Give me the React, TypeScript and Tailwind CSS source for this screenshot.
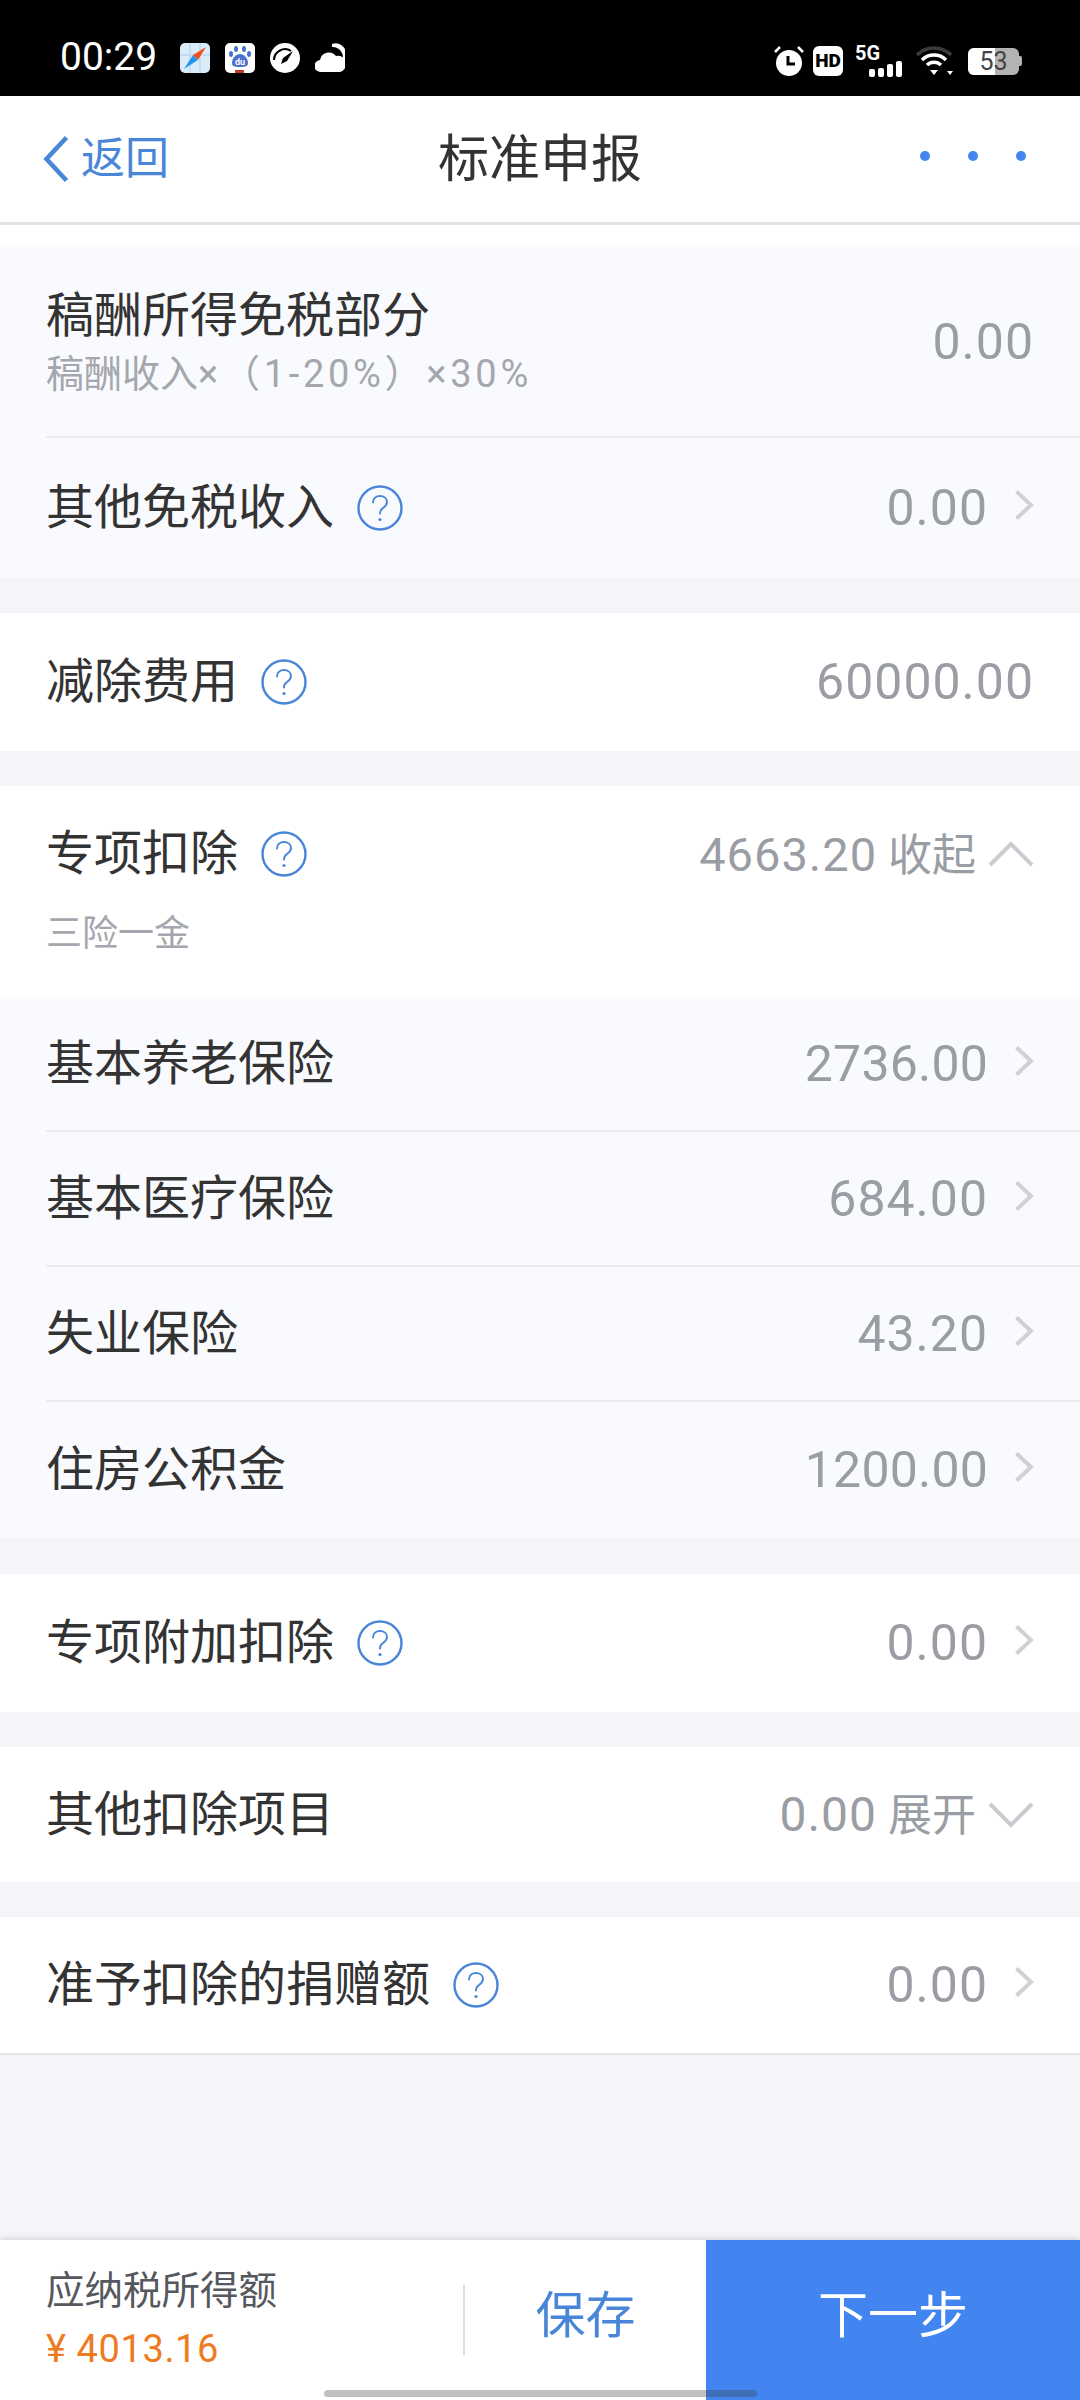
const fontStack = 'font-["Roboto","Noto_Sans_CJK_SC",sans-serif]';

function Help() {
  return (
    <svg width="46" height="46" viewBox="0 0 46 46" fill="none" className="shrink-0">
      <circle cx="23" cy="23" r="21.5" stroke="#4a86d8" strokeWidth="2.4" />
      <path d="M16 17.5c0-4 3-6.500 7-6.500s7 2.500 7 6c0 3-2 4.500-4 6-2 1.400-3 2.500-3 5.500" stroke="#4a86d8" strokeWidth="2" strokeLinecap="round" />
      <circle cx="23" cy="34.500" r="1.600" fill="#4a86d8" />
    </svg>
  );
}

function Chevron() {
  return (
    <svg width="20" height="32" viewBox="0 0 20 32" fill="none" className="shrink-0 -mt-[6px]">
      <path d="M2.500 2.500 L17 16 L2.500 29.500" stroke="#cfd1d6" strokeWidth="4" />
    </svg>
  );
}

function Fold({ up }: { up: boolean }) {
  return (
    <svg width="46" height="26" viewBox="0 0 46 26" fill="none" className="shrink-0">
      <path d={up ? 'M2 24 L23 3 L44 24' : 'M2 2 L23 23 L44 2'} stroke="#c9cbd1" strokeWidth="4" />
    </svg>
  );
}

function Row({ label, value, help, arrow, divider, tight, heightClass }: { label: string; value: string; help?: boolean; arrow?: boolean; divider?: boolean; tight?: boolean; heightClass: string }) {
  return (
    <div className="pl-[46px]">
      <div className={`flex items-center justify-between pr-[46px] ${heightClass} ${divider ? 'border-b-2 border-[#e9ebee]' : ''}`}>
        <div className="flex items-center gap-[23px] text-[48px] leading-none text-[#333]">
          <span>{label}</span>
          {help && <Help />}
        </div>
        <div className="flex items-center gap-[26px]">
          <span className={`text-[50px] leading-none text-[#9a9da3] ${tight ? 'tracking-[0.2px]' : 'tracking-[1px]'}`}>{value}</span>
          {arrow && <Chevron />}
        </div>
      </div>
    </div>
  );
}

function Gap({ heightClass }: { heightClass: string }) {
  return <div className={`${heightClass} bg-[#f4f5f9]`} />;
}

function StatusBar() {
  return (
    <div className="h-[96px] bg-black flex items-end justify-between pb-[19px] pl-[60px] pr-[58px] text-white shrink-0">
      <div className="flex items-center">
        <span className="text-[39px] leading-none w-[120px] font-['Roboto',sans-serif]">00:29</span>
        <svg width="30" height="30" viewBox="0 0 30 30">
          <rect width="30" height="30" rx="5" fill="#dcebf8" />
          <path d="M10 0V30M0 12H30M20 0V30" stroke="#c4dcf2" strokeWidth="2" />
          <path d="M4 26 L13 12 L18 17 Z" fill="#1b9af0" />
          <path d="M13 12 L26 4 L18 17 Z" fill="#f2501e" />
        </svg>
        <svg width="30" height="30" viewBox="0 0 30 30" className="ml-[15px]">
          <rect width="30" height="30" rx="5" fill="#fff" />
          <ellipse cx="11" cy="6" rx="2" ry="3" fill="#4a6fd0" />
          <ellipse cx="19" cy="6" rx="2" ry="3" fill="#4a6fd0" />
          <ellipse cx="6" cy="11" rx="2" ry="3" fill="#4a6fd0" />
          <ellipse cx="24" cy="11" rx="2" ry="3" fill="#4a6fd0" />
          <path d="M7 20c0-5 4-9 8-9s8 4 8 9c0 3-2 4-8 4s-8-1-8-4z" fill="#4a6fd0" />
          <text x="15" y="22" textAnchor="middle" fontSize="9" fontWeight="700" fill="#fff" fontFamily="Roboto, sans-serif">du</text>
          <rect x="10" y="27" width="9" height="3" fill="#c0392b" />
        </svg>
        <svg width="30" height="30" viewBox="0 0 30 30" className="ml-[15px]">
          <circle cx="15" cy="15" r="15" fill="#fff" />
          <path d="M4 17a11 11 0 0 1 17-9" fill="none" stroke="#000" strokeWidth="2" />
          <path d="M23 8 L13 15 L11 21 L17 18 Z" fill="#000" />
        </svg>
        <svg width="30" height="30" viewBox="0 0 30 30" className="ml-[15px]">
          <path d="M6 29a6 6 0 0 1-1-12 9 9 0 0 1 16-4 8 8 0 0 1 4 16z" fill="#fff" />
          <path d="M17 1a10 10 0 0 1 13 13l0 6-3-2a10 10 0 0 0-10-14z" fill="#fff" />
        </svg>
      </div>
      <div className="flex items-center">
        <svg width="30" height="32" viewBox="0 0 30 32">
          <circle cx="15" cy="18" r="13" fill="#fff" />
          <path d="M14 11v8h7" fill="none" stroke="#000" strokeWidth="3" />
          <path d="M1 7 L6 2 M29 7 L24 2" stroke="#fff" strokeWidth="2.500" />
        </svg>
        <div className="ml-[9px] w-[30px] h-[30px] rounded-[6px] bg-white text-black text-[19px] font-black leading-[30px] text-center font-['Roboto',sans-serif]">HD</div>
        <div className="ml-[12px] relative w-[47px] h-[32px]">
          <span className="absolute left-0 -top-[2px] text-[20px] font-bold leading-none font-['Roboto',sans-serif]">5G</span>
          <div className="absolute right-0 bottom-0 flex items-end gap-[3px]">
            <div className="w-[6px] h-[8px] bg-white rounded-[2px]" />
            <div className="w-[6px] h-[9px] bg-white rounded-[2px]" />
            <div className="w-[6px] h-[13px] bg-white rounded-[2px]" />
            <div className="w-[6px] h-[16px] bg-white rounded-[2px]" />
          </div>
        </div>
        <svg width="38" height="30" viewBox="0 0 38 30" className="ml-[14px]">
          <path d="M1 9a24 24 0 0 1 34 0" fill="none" stroke="#3a3a3a" strokeWidth="3.500" />
          <path d="M6 14a17 17 0 0 1 24 0" fill="none" stroke="#fff" strokeWidth="3.500" />
          <path d="M11 19a10 10 0 0 1 14 0" fill="none" stroke="#fff" strokeWidth="3.500" />
          <path d="M14 24 H22 L18 29 Z" fill="#fff" />
          <path d="M31 25 H37 L34 29 Z" fill="#fff" />
        </svg>
        <div className="ml-[14px] flex items-center">
          <div className="relative w-[51px] h-[27px] rounded-[6px] bg-[#b3b3b3]">
            <div className="absolute left-0 top-0 bottom-0 w-[27px] rounded-l-[6px] bg-white" />
            <span className="absolute inset-0 text-center text-[25px] leading-[27px] text-[#444] font-['Roboto',sans-serif]">53</span>
          </div>
          <div className="w-[3px] h-[10px] bg-[#b3b3b3] rounded-r-[2px]" />
        </div>
      </div>
    </div>
  );
}

export default function App() {
  return (
    <div className={`relative w-[1080px] h-[2400px] flex flex-col bg-[#f4f5f9] overflow-hidden ${fontStack}`}>
      <StatusBar />

      <div className="h-[129px] bg-white border-b-[3px] border-[#e3e3e3] flex items-center justify-between pl-[43px] pr-[54px] shrink-0">
        <div className="flex items-center gap-[12px] w-[300px] text-[#4a86d8]">
          <svg width="26" height="48" viewBox="0 0 26 48" fill="none" className="shrink-0">
            <path d="M23.500 2.500 L3.500 24 L23.500 45.500" stroke="#4a86d8" strokeWidth="4.600" />
          </svg>
          <span className="text-[44px] leading-none">返回</span>
        </div>
        <span className="text-[51px] leading-none text-[#333] ml-[11px]">标准申报</span>
        <div className="flex items-center justify-end gap-[38px] w-[300px] -mt-[6px]">
          <div className="w-[10px] h-[10px] rounded-full bg-[#4285f0]" />
          <div className="w-[10px] h-[10px] rounded-full bg-[#4285f0]" />
          <div className="w-[10px] h-[10px] rounded-full bg-[#4285f0]" />
        </div>
      </div>

      <div className="h-[20px] bg-white shrink-0" />

      <div className="bg-[#f9fafd] shrink-0">
        <div className="pl-[46px]">
          <div className="h-[193px] flex items-center justify-between pr-[46px] border-b-2 border-[#e9ebee]">
            <div>
              <div className="text-[48px] leading-[60px] text-[#333]">稿酬所得免税部分</div>
              <div className="text-[38px] leading-[44px] mt-[6px] text-[#a4a7ad]">
                稿酬收入<span className="tracking-[3.700px]">×（1-20%）×30%</span>
              </div>
            </div>
            <span className="text-[50px] leading-none tracking-[1px] text-[#9a9da3] mt-[2px]">0.00</span>
          </div>
        </div>
        <Row label="其他免税收入" value="0.00" help arrow heightClass="h-[140px]" />
      </div>
      <Gap heightClass="h-[35px] shrink-0" />

      <div className="bg-white shrink-0">
        <Row label="减除费用" value="60000.00" help heightClass="h-[138px]" />
      </div>
      <Gap heightClass="h-[35px] shrink-0" />

      <div className="bg-white h-[211px] px-[46px] pt-[39px] shrink-0">
        <div className="flex items-center justify-between h-[58px]">
          <div className="flex items-center gap-[23px] text-[48px] leading-none text-[#333]">
            <span>专项扣除</span>
            <Help />
          </div>
          <div className="flex items-center gap-[12px] text-[#9a9da3]">
            <span className="text-[44px] leading-none"><span className="text-[47px] tracking-[1px]">4663.20</span> 收起</span>
            <Fold up />
          </div>
        </div>
        <div className="text-[36px] leading-none text-[#a4a7ad] mt-[33px]">三险一金</div>
      </div>

      <div className="bg-[#f9fafd] shrink-0">
        <Row label="基本养老保险" value="2736.00" arrow divider tight heightClass="h-[135px]" />
        <Row label="基本医疗保险" value="684.00" arrow divider heightClass="h-[135px]" />
        <Row label="失业保险" value="43.20" arrow divider heightClass="h-[135px]" />
        <Row label="住房公积金" value="1200.00" arrow tight heightClass="h-[136px]" />
      </div>
      <Gap heightClass="h-[36px] shrink-0" />

      <div className="bg-white shrink-0">
        <Row label="专项附加扣除" value="0.00" help arrow heightClass="h-[138px]" />
      </div>
      <Gap heightClass="h-[35px] shrink-0" />

      <div className="bg-white shrink-0 h-[135px] px-[46px] flex items-center justify-between">
        <span className="text-[48px] leading-none text-[#333]">其他扣除项目</span>
        <div className="flex items-center gap-[12px] text-[#9a9da3]">
          <span className="text-[44px] leading-none"><span className="text-[48px] tracking-[1px]">0.00</span> 展开</span>
          <Fold up={false} />
        </div>
      </div>
      <Gap heightClass="h-[35px] shrink-0" />

      <div className="bg-white shrink-0 border-b-2 border-[#e3e4e8]">
        <Row label="准予扣除的捐赠额" value="0.00" help arrow heightClass="h-[136px]" />
      </div>

      <div className="flex-1" />

      <div className="h-[160px] shrink-0 bg-white flex shadow-[0_-2px_6px_rgba(0,0,0,0.12)]">
        <div className="w-[463px] pl-[46px] pt-[32px]">
          <div className="text-[38.500px] leading-none text-[#55585e]">应纳税所得额</div>
          <div className="text-[38px] leading-none tracking-[0.6px] text-[#ee7a22] mt-[19px]">¥ 4013.16</div>
        </div>
        <div className="w-[2px] h-[70px] mt-[45px] bg-[#dedede]" />
        <div className="w-[241px] flex items-center justify-center pb-[8px] text-[50px] leading-none text-[#4a86d8]">保存</div>
        <div className="flex-1 bg-[#4285f0] flex items-center justify-center pb-[8px] text-[50px] leading-none text-white">下一步</div>
      </div>

      <div className="absolute left-[324px] top-[2390px] w-[433px] h-[7px] rounded-full bg-[rgba(60,60,60,0.32)]" />
    </div>
  );
}
